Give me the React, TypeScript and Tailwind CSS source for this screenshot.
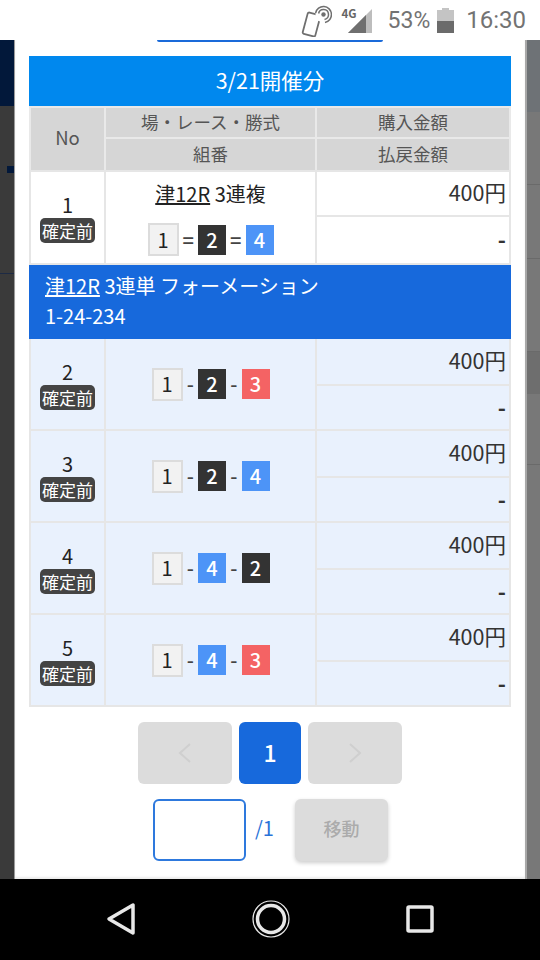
import React from "react";

const font = { fontFamily: '"Noto Sans CJK JP", "Noto Sans", sans-serif' };

type Kind = "w" | "k" | "b" | "r";

function Ball({ n, kind }: { n: number; kind: Kind }) {
  if (kind === "w")
    return (
      <span className="flex h-[33px] w-[31px] items-center justify-center border-2 border-[#dcdcdc] bg-[#f2f2f2] text-[20px] text-[#222]">
        {n}
      </span>
    );
  const bg = kind === "k" ? "bg-[#333333]" : kind === "b" ? "bg-[#4d94f7]" : "bg-[#f46364]";
  return (
    <span className={`flex h-[30px] w-[28px] items-center justify-center text-[20px] font-medium text-white ${bg}`}>
      {n}
    </span>
  );
}

function Combo({ balls, sep }: { balls: [number, Kind][]; sep: string }) {
  const w = sep === "=" ? "w-[19.5px]" : "w-[15.5px]";
  return (
    <div className="flex items-center justify-center">
      {balls.map(([n, k], i) => (
        <React.Fragment key={i}>
          {i > 0 && <span className={`${w} text-center text-[20px] font-medium leading-none text-[#444]`}>{sep}</span>}
          <Ball n={n} kind={k} />
        </React.Fragment>
      ))}
    </div>
  );
}

function NoCell({ n, first }: { n: number; first?: boolean }) {
  return (
    <div className={`flex flex-col items-center justify-center border-r-2 border-[#e6e6e6] ${first ? "pb-[1px]" : ""}`}>
      <span className="text-[20px] leading-[26px] text-[#222]">{n}</span>
      <span className="rounded-[5px] bg-[#444444] px-[2px] text-[17px] leading-[25px] text-white">確定前</span>
    </div>
  );
}

function Amounts({ first }: { first?: boolean }) {
  return (
    <div className="flex flex-col">
      <div className={`flex items-center justify-end border-b-2 border-[#e6e6e6] pb-[2px] pr-[3px] text-[21.5px] text-[#333] ${first ? "h-[45px]" : "h-[47px]"}`}>
        400円
      </div>
      <div className="flex flex-1 items-center justify-end pb-[3px] pr-[3px] text-[22px] font-bold text-[#333]">-</div>
    </div>
  );
}

function BetRow({ n, balls }: { n: number; balls: [number, Kind][] }) {
  return (
    <div className="grid h-[92px] grid-cols-[75px_211px_1fr] border-x-2 border-b-2 border-[#e6e6e6] bg-[#e9f1fd]">
      <NoCell n={n} />
      <div className="flex items-center justify-center border-r-2 border-[#e6e6e6]">
        <Combo balls={balls} sep="-" />
      </div>
      <Amounts />
    </div>
  );
}

function HeadCell({ children, last }: { children: React.ReactNode; last?: boolean }) {
  return (
    <div className={`flex h-[31px] items-center justify-center border-[#e9e9e9] bg-[#d6d6d6] text-[17.5px] text-[#555] ${last ? "" : "border-b-2"}`}>
      {children}
    </div>
  );
}

export default function App() {
  return (
    <div className="flex h-[960px] w-[540px] flex-col overflow-hidden bg-black" style={font}>
      {/* status bar */}
      <div className="flex h-[40px] shrink-0 items-center justify-end bg-white pr-[14px] text-[#737373]">
        <svg width="32" height="32" viewBox="0 0 32 32" fill="none" stroke="#6f6f6f" className="mr-[11px] mt-[1px]">
          <rect x="5" y="8.5" width="13" height="22" rx="1.5" transform="rotate(15 11.5 19.5)" strokeWidth="1.8" fill="white" />
          <circle cx="23.5" cy="9.5" r="8" fill="white" stroke="none" />
          <path d="M15.6 8 A8 8 0 1 1 25 17.4" strokeWidth="1.5" />
          <path d="M18.6 8.5 A5 5 0 1 1 24.5 14.4" strokeWidth="1.5" />
          <circle cx="23.5" cy="9.5" r="2.2" fill="#6f6f6f" stroke="none" />
        </svg>
        <div className="relative mr-[15px] h-[30px] w-[30px]">
          <span className="absolute left-[-1px] top-[2px] text-[11.5px] font-bold leading-[12px] text-[#666]">4G</span>
          <svg width="30" height="30" viewBox="0 0 30 30" className="absolute inset-0">
            <path d="M5 28 L29 4 V28 Z" fill="#bdbdbd" />
            <path d="M5 28 L23 10 V28 Z" fill="#6f6f6f" />
          </svg>
        </div>
        <span className="mr-[7px] text-[23px] leading-none" style={{ fontFamily: "Roboto, sans-serif" }}>53%</span>
        <svg width="17" height="25" viewBox="0 0 17 25" className="mr-[12px]">
          <path d="M5 0 H12 V2 H17 V25 H0 V2 H5 Z" fill="#c4c4c4" />
          <rect x="0" y="13" width="17" height="12" fill="#6b6b6b" />
        </svg>
        <span className="text-[24px] leading-none" style={{ fontFamily: "Roboto, sans-serif" }}>16:30</span>
      </div>

      {/* dimmed page + modal */}
      <div className="flex min-h-0 flex-1">
        <div className="flex w-[15px] shrink-0 flex-col border-r border-[#9a9a9a] bg-[#3a3a3a]">
          <div className="h-[66px] bg-[#02183a]" />
          <div className="ml-[7px] mt-[60px] h-[7px] bg-[#02183a]" />
          <div className="mt-[100px] h-[1px] bg-[#1d2a44]" />
        </div>

        <div className="flex w-[510px] shrink-0 flex-col bg-white px-[14px] shadow-[inset_0_-2px_2px_rgba(0,0,0,0.08)]">
          <div className="mx-auto h-[2px] w-[226px] rounded-b-[2px] bg-[#1a6ad9]" />
          <div className="mt-[14px] flex h-[50px] items-center justify-center bg-[#0088ee] pb-[1px] text-[21.5px] text-white">
            3/21開催分
          </div>

          <div className="grid grid-cols-[75px_211px_1fr] border-x-2 border-t-2 border-[#e9e9e9]">
            <div className="flex items-center justify-center border-r-2 border-[#e9e9e9] bg-[#d6d6d6] pb-[2px] text-[18.5px] text-[#555]">
              No
            </div>
            <div className="border-r-2 border-[#e9e9e9]">
              <HeadCell>場・レース・勝式</HeadCell>
              <HeadCell last>組番</HeadCell>
            </div>
            <div>
              <HeadCell>購入金額</HeadCell>
              <HeadCell last>払戻金額</HeadCell>
            </div>
          </div>

          <div className="grid h-[95px] grid-cols-[75px_211px_1fr] border-2 border-[#e6e6e6] bg-white">
            <NoCell n={1} first />
            <div className="flex flex-col items-center border-r-2 border-[#e6e6e6] pt-[7px]">
              <div className="text-[20px] leading-[30px] text-[#222]">
                <span className="underline">津12R</span> 3連複
              </div>
              <div className="mt-[14px]">
                <Combo balls={[[1, "w"], [2, "k"], [4, "b"]]} sep="=" />
              </div>
            </div>
            <Amounts first />
          </div>

          <div className="flex h-[74px] flex-col justify-center bg-[#1769dc] pb-[2px] pl-[16px] text-[20px] leading-[30px] text-white">
            <div>
              <span className="underline">津12R</span> 3連単 フォーメーション
            </div>
            <div>1-24-234</div>
          </div>

          <BetRow n={2} balls={[[1, "w"], [2, "k"], [3, "r"]]} />
          <BetRow n={3} balls={[[1, "w"], [2, "k"], [4, "b"]]} />
          <BetRow n={4} balls={[[1, "w"], [4, "b"], [2, "k"]]} />
          <BetRow n={5} balls={[[1, "w"], [4, "b"], [3, "r"]]} />

          <div className="mt-[15px] flex justify-center gap-[7px]">
            <div className="flex h-[62px] w-[94px] items-center justify-center rounded-[6px] bg-[#dcdcdc]">
              <svg width="16" height="24" viewBox="0 0 16 24" fill="none" stroke="#cfcfcf" strokeWidth="2">
                <path d="M13 3 L3 12 L13 21" />
              </svg>
            </div>
            <div className="flex h-[62px] w-[62px] items-center justify-center rounded-[6px] bg-[#1769dc] pb-[1px] text-[23px] font-medium text-white">
              1
            </div>
            <div className="flex h-[62px] w-[94px] items-center justify-center rounded-[6px] bg-[#dcdcdc]">
              <svg width="16" height="24" viewBox="0 0 16 24" fill="none" stroke="#cfcfcf" strokeWidth="2">
                <path d="M3 3 L13 12 L3 21" />
              </svg>
            </div>
          </div>

          <div className="mt-[15px] flex items-start pl-[124px]">
            <input
              aria-label="page"
              className="h-[62px] w-[93px] rounded-[6px] border-2 border-[#2e79dd] bg-white outline-none"
            />
            <span className="ml-[9px] mt-[14px] text-[20px] leading-[30px] text-[#2a72d8]">/1</span>
            <div className="ml-[21px] flex h-[62px] w-[93px] items-center justify-center rounded-[6px] bg-[#dcdcdc] pb-[3px] text-[18px] font-medium text-[#ababab] shadow-[0_2px_4px_rgba(0,0,0,0.2)]">
              移動
            </div>
          </div>
        </div>

        <div className="flex flex-1 flex-col border-l-2 border-[#a8a8a8] bg-[#787878]">
          <div className="h-[72px] bg-[#6e7276]" />
          <div className="mt-[72px] h-[1px] bg-[#6a6a6a]" />
          <div className="mt-[73px] h-[1px] bg-[#6a6a6a]" />
          <div className="mt-[92px] h-[1px] bg-[#6a6a6a]" />
          <div className="h-[42px] bg-[#6e6e6e]" />
          <div className="mt-[70px] h-[1px] bg-[#6a6a6a]" />
        </div>
      </div>

      {/* navigation bar */}
      <div className="flex h-[81px] shrink-0 items-center justify-center gap-[116px] bg-black pb-[1px]">
        <svg width="30" height="34" viewBox="0 0 30 34" fill="none" stroke="#e8e8e8" strokeWidth="3.5" strokeLinejoin="round">
          <path d="M27 3 V31 L3 17 Z" />
        </svg>
        <svg width="38" height="38" viewBox="0 0 38 38" fill="none" stroke="#e8e8e8">
          <circle cx="19" cy="19" r="18" strokeWidth="1.2" />
          <circle cx="19" cy="19" r="13.5" strokeWidth="3.5" />
        </svg>
        <svg width="28" height="28" viewBox="0 0 28 28" fill="none" stroke="#e8e8e8" strokeWidth="3.5" strokeLinejoin="round">
          <rect x="2" y="2" width="24" height="24" rx="1" />
        </svg>
      </div>
    </div>
  );
}
